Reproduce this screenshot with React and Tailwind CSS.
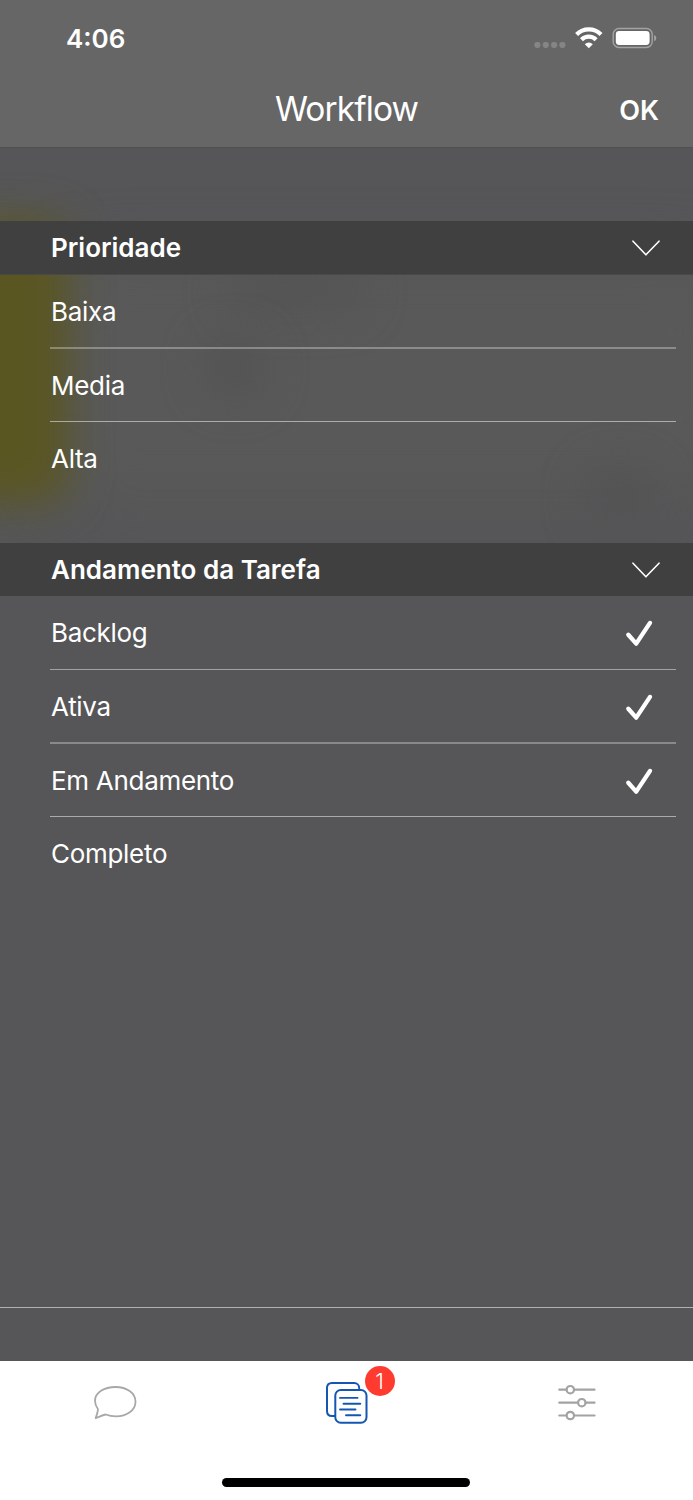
import React from "react";

function StatusBar() {
  return (
    <div className="flex h-[76px] items-center justify-between pl-[66px] pr-[36px]">
      <span className="pt-px text-[26px] leading-8 font-semibold">4:06</span>
      <svg width="124" height="28" viewBox="0 0 124 28" className="block">
        <g fill="#858585">
          <rect x="1.4" y="17.9" width="6" height="6" rx="2.4" />
          <rect x="9.8" y="17.9" width="6" height="6" rx="2.4" />
          <rect x="18.1" y="17.9" width="6" height="6" rx="2.4" />
          <rect x="26.4" y="17.9" width="6" height="6" rx="2.4" />
        </g>
        <g fill="none" stroke="#fff" strokeWidth="4.2">
          <path d="M43.6 10.500a17.2 17.2 0 0 1 24.4 0" />
          <path d="M48.5 15.700a10.3 10.3 0 0 1 14.6 0" />
        </g>
        <path d="M55.8 24.200l-4-4a5.7 5.7 0 0 1 8 0z" fill="#fff" />
        <rect x="80.2" y="4.500" width="39" height="19" rx="5.8" fill="none" stroke="#a3a3a3" strokeWidth="1.4" />
        <rect x="82.8" y="7.1" width="33.8" height="13.8" rx="3.4" fill="#fff" />
        <path d="M121.1 10.9c1.3.5 2.2 1.8 2.2 3.2s-.9 2.700-2.200 3.200z" fill="#a3a3a3" />
      </svg>
    </div>
  );
}

function NavBar() {
  return (
    <div className="grid h-[72px] grid-cols-[1fr_auto_1fr] items-start border-b border-[#505050] px-[34px]">
      <span />
      <h1 className="pt-[13px] text-[33.5px] leading-[40px] font-normal tracking-[-0.9px]">Workflow</h1>
      <button className="justify-self-end pt-[19px] text-[27px] leading-8 font-semibold tracking-[0px]">OK</button>
    </div>
  );
}

function SectionHeader({ title }) {
  return (
    <div className="flex h-[53px] items-center justify-between bg-[#404040] pl-[51px] pr-[33px]">
      <h2 className="text-[26px] leading-8 font-semibold">{title}</h2>
      <svg width="28" height="16" viewBox="0 0 28 16" fill="none" stroke="#fff" strokeWidth="1.6" strokeLinecap="round" strokeLinejoin="round">
        <path d="M1 1.200L13.900 14.800L27 1.200" />
      </svg>
    </div>
  );
}

function Row({ label, checked = false, className }) {
  return (
    <li className={"mr-[17px] ml-[50px] flex items-center justify-between pr-[23px] pl-px " + className}>
      <span className="text-[26px] leading-8 font-normal tracking-[-0.3px]">{label}</span>
      {checked && (
        <svg width="28" height="28" viewBox="0 0 28 28" fill="none" stroke="#fff" strokeWidth="4.3" strokeLinecap="round" strokeLinejoin="round">
          <path d="M3.300 15.700L11.200 24.600L25 3.900" />
        </svg>
      )}
    </li>
  );
}

function TabBar() {
  return (
    <nav className="flex h-[139px] flex-col items-center justify-between bg-white pb-[13px]">
      <div className="grid w-full grid-cols-3">
        <button className="flex justify-center pt-[22px]">
          <svg width="44" height="40" viewBox="0 0 44 40" fill="none" stroke="#a8a8a8" strokeWidth="1.8" strokeLinejoin="round">
            <path d="M3.900 26C1.900 23.300 1 20.800 1 17.800C1 9.500 10.300 4 21.500 4S41.500 10 41.500 18.700S32.700 33.300 22 33.300C18.200 33.300 14.800 32.700 11.700 31.500C8.500 32.200 5 33.900 1.700 35.100C2.600 32.200 4.100 28.700 3.900 26Z" />
          </svg>
        </button>
        <button className="flex justify-center pt-[19px]">
          <span className="relative block">
            <svg width="44" height="46" viewBox="0 0 44 46" fill="none" stroke="#1457b3" strokeWidth="2" strokeLinecap="round">
              <path d="M34.200 8.400V8C34.200 5 31.900 3 29.200 3H7C4 3 2 5 2 8V31C2 34 4 36 7 36H10" />
              <rect x="10.300" y="10" width="31.200" height="32.700" rx="5.500" />
              <path d="M15 17.900H32.500M18.500 23.700H35.300M15 29.500H30.500M21 35.300H35.300" strokeWidth="1.900" />
            </svg>
            <span className="absolute top-[-14px] left-[40px] flex h-[30px] w-[30px] items-center justify-center rounded-full bg-[#ff3b30] text-[22px] leading-[30px] font-light text-white">1</span>
          </span>
        </button>
        <button className="flex justify-center pt-[22px] pr-px">
          <svg width="38" height="40" viewBox="0 0 38 40" fill="none" stroke="#a3a3a3" strokeWidth="2.200" strokeLinecap="round">
            <path d="M1.300 6.700H8.500M16 6.700H36.500M1.300 19.700H20M27.500 19.700H36.500M1.300 32.500H8.500M16 32.500H36.500" />
            <circle cx="12.300" cy="6.700" r="3.700" />
            <circle cx="23.800" cy="19.700" r="3.700" />
            <circle cx="12.300" cy="32.500" r="3.700" />
          </svg>
        </button>
      </div>
      <div className="mr-px h-[9px] w-[248px] rounded-full bg-black" />
    </nav>
  );
}

export default function App() {
  return (
    <div className="flex h-[1500px] w-[693px] flex-col overflow-hidden bg-[#565658] font-['Inter',sans-serif] text-white">
      <header className="h-[148px] bg-[#666666]">
        <StatusBar />
        <NavBar />
      </header>
      <main className="relative isolate flex flex-1 flex-col overflow-hidden">
        <div className="absolute top-[110px] left-[40px] -z-10 h-[240px] w-[700px] rounded-[60px] bg-[#595959] blur-[30px]" />
        <div className="absolute top-[125px] left-[230px] -z-10 h-[35px] w-[130px] rounded-full bg-[#525353] blur-[22px]" />
        <div className="absolute top-[190px] left-[205px] -z-10 h-[60px] w-[60px] rounded-full bg-[#535353] blur-[20px]" />
        <div className="absolute top-[320px] left-[585px] -z-10 h-[60px] w-[70px] rounded-full bg-[#535354] blur-[20px]" />
        <div className="absolute top-[73px] left-[-100px] -z-10 h-[282px] w-[168px] rounded-[24px] bg-[#5a5622] blur-[20px]" />
        <section className="mt-[73px] flex h-[322px] flex-col">
          <div className="border-b border-[#494949]">
            <SectionHeader title="Prioridade" />
          </div>
          <ul>
            <Row label="Baixa" className="h-[74px] border-b-2 border-white/30 pt-px" />
            <Row label="Media" className="h-[73px] border-b border-white/50 pt-px" />
            <Row label="Alta" className="h-[73px]" />
          </ul>
        </section>
        <section>
          <SectionHeader title="Andamento da Tarefa" />
          <ul>
            <Row label="Backlog" checked className="h-[74px] border-b border-white/45" />
            <Row label="Ativa" checked className="h-[74px] border-b-2 border-white/30 pt-px" />
            <Row label="Em Andamento" checked className="h-[73px] border-b border-white/50 pt-px" />
            <Row label="Completo" className="h-[73px]" />
          </ul>
        </section>
        <div className="mt-auto h-[54px] border-t border-[#b0b0b0]" />
      </main>
      <TabBar />
    </div>
  );
}
